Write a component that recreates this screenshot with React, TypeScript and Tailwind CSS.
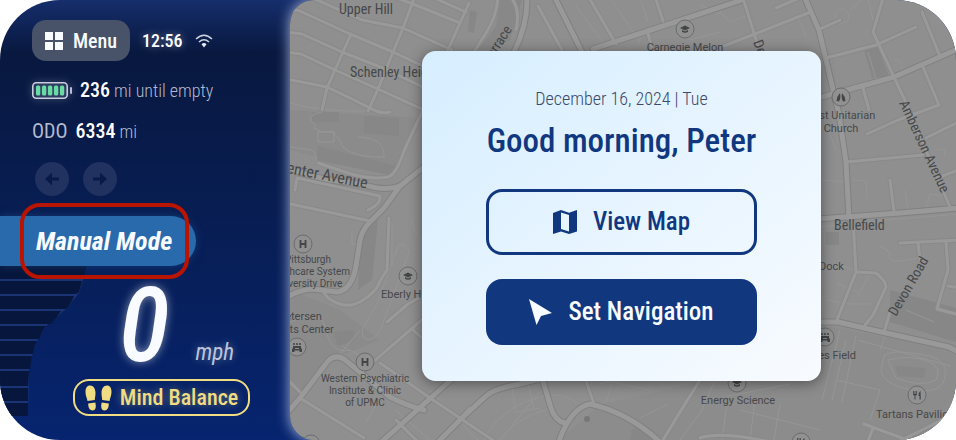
import React from "react";

const majorRoads = [
  "M286 166 Q300 174 330 180 L362 184 Q385 192 400 186 L425 166",
  "M400 186 L384 208 L370 222 Q362 230 360 240 L356 266 Q352 290 337 292 L312 289 Q298 290 286 298",
  "M378 445 L462 370",
  "M436 444 L462 418 L486 396 Q495 388 520 384 L560 374",
  "M593 49 L660 27 L742 0",
  "M804 -4 L819 30 L833 90 L839 114 L846 162 L849 218",
  "M818 98 L876 82 L894 77 L960 48",
  "M818 219 L900 213 L960 208",
  "M815 322 L838 322 L886 333 L949 347 L960 353",
  "M286 414 L300 398 L328 361 Q335 354 344 359 L390 397 Q405 405 424 410",
  "M527 -4 Q528 24 514 52",
  "M554 -4 L582 52",
  "M558 444 Q570 408 590 404 Q630 413 662 444",
  "M542 378 L551 408 Q555 421 565 423",
];

const minorRoads = [
  "M286 14 Q294 7 302 12 L350 34 L393 52 L425 67",
  "M308 -4 L362 20 L403 28 L452 50",
  "M385 -6 L413 4 L460 23",
  "M434 -2 L466 12",
  "M415 -4 L403 28 L393 52 L378 89 L368 111",
  "M351 34 L335 70 L327 88 L322 110",
  "M286 32 L302 34 L342 52 L383 68 L425 88",
  "M286 52 L301 54 L335 70 L378 89 L422 109",
  "M286 79 L327 87 L350 98 L376 111 Q384 114 390 112",
  "M469 3 L460 23 L447 52",
  "M498 -4 Q497 16 486 33 L474 52",
  "M510 -4 Q521 9 516 30",
  "M423 110 L404 151 Q396 175 388 177 Q370 180 348 173 L318 163",
  "M295 190 L297 178 L380 196 Q381 204 368 210",
  "M286 203 L370 221",
  "M321 289 L328 298 Q345 310 360 302 Q377 292 380 281 L387 270 L389 218",
  "M387 322 L408 304 L426 294",
  "M362 372 L380 356 L424 318",
  "M300 398 L364 438",
  "M290 382 L300 392",
  "M380 363 L433 400 L500 445",
  "M396 420 L418 442",
  "M413 330 L430 345",
  "M440 440 L470 408",
  "M585 378 L594 404",
  "M588 -4 L616 44",
  "M538 6 L562 50",
  "M655 -4 L663 21",
  "M647 30 L652 48",
  "M700 380 L680 412 L663 440",
  "M724 46 L808 13",
  "M743 -2 L758 46",
  "M776 8 L804 -4",
  "M820 29 L840 20",
  "M826 58 L876 45 L916 27",
  "M883 -2 L873 32 L894 77 L907 105 L930 160 L950 207",
  "M922 12 L939 54",
  "M923 67 L939 105",
  "M863 88 L869 110",
  "M867 134 L898 120 L939 105",
  "M926 138 L960 121",
  "M846 162 L923 155",
  "M940 177 L960 169",
  "M890 180 L894 211",
  "M853 220 L856 272 L837 320",
  "M856 272 L876 273 Q886 281 886 287 L873 315 L865 325",
  "M900 243 L960 240",
  "M918 243 L920 260",
  "M890 312 L884 332",
  "M946 242 L948 270 L937 309 L960 315",
  "M948 286 L960 288",
  "M864 424 L918 444",
  "M873 428 L867 444",
  "M898 442 L930 426 L960 410",
  "M700 438 Q720 431 770 442",
];

const paths = [
  "M322 112 Q308 114 311 122 Q317 124 314 128 Q322 134 332 131 Q340 138 343 147 Q355 158 384 157",
  "M358 137 Q386 138 384 158",
  "M290 147 L312 150 Q318 155 316 164",
  "M318 132 h16 v10 h-16 z",
  "M290 103 Q320 112 368 111",
  "M363 337 Q370 345 380 331 L409 253 Q408 244 399 244 L395 254",
  "M363 337 L362 330 L378 302 L398 246",
  "M290 322 Q320 310 325 326 Q330 355 350 350",
  "M335 360 L360 330 M342 346 L372 362",
  "M412 218 Q412 234 424 240",
  "M352 230 v14 h10 M392 222 v44",
  "M384 392 L366 422 M395 410 L430 440",
  "M430 390 L478 440 M500 440 L540 392",
  "M484 440 Q500 406 545 396 M500 440 Q512 420 550 408",
  "M512 388 L516 412 L540 408 M528 384 L534 408",
  "M553 395 Q570 395 577 404 M600 384 L618 378",
  "M606 402 L612 382 L650 390 M640 418 L668 404",
  "M714 382 L702 410 L680 440",
  "M722 440 L728 396 L760 390 L790 384 M740 410 L820 430",
  "M755 400 L750 440 M780 404 L774 440",
  "M610 -2 L640 42 M640 -2 L648 22 M576 6 L604 44",
  "M670 18 L690 40 L720 32 M700 5 L720 14",
  "M720 12 L730 22 L746 16 M798 18 L806 36",
  "M835 16 a7 7 0 1 0 14 0 a7 7 0 1 0 -14 0",
  "M850 10 L864 -2 M868 -2 L873 20",
  "M895 60 Q904 60 902 70 M868 52 L878 86",
  "M853 180 L866 181 L867 200 M822 180 L846 182",
  "M905 190 L908 210 M926 208 L930 194 L944 196",
  "M936 150 Q948 146 944 156 M822 114 L836 150",
  "M820 227 L884 220 L960 214",
  "M824 270 Q840 260 856 272 M826 300 L850 304 L870 304",
  "M880 246 L890 252 Q886 262 900 261 L918 258",
  "M872 270 L858 296 M838 284 L858 292",
  "M884 356 Q890 348 930 356 Q950 362 944 380 Q940 394 912 390 Q882 384 881 370 Z",
  "M888 360 Q910 354 930 362 Q942 368 936 380 Q920 388 896 378 Z",
  "M822 400 L840 330 M846 340 L832 400 M856 336 L842 402",
  "M858 340 L950 366 M836 380 L880 390 L870 420",
  "M906 310 L934 322 M880 350 L886 334 L880 330",
];

const blocks = [
  "M470 10 L477 12 L474 33 L468 31 Z",
  "M364 116 L399 118 L399 136 L364 133 Z",
  "M312 112 L339 112 L339 122 L312 122 Z",
  "M318 146 L396 166 L390 175 L316 160 Z",
  "M864 50 L878 47 L889 76 L872 78 Z",
  "M826 232 h13 v13 h-13 z",
  "M333 332 L355 330 L353 340 L338 346 Z",
  "M632 430 L640 424 L662 440 L630 440 Z",
  "M895 366 L926 368 L924 378 L898 376 Z",
  "M890 290 L956 308 L956 342 L890 322 Z",
  "M361 228 L378 220 L372 280 L358 290 Z",
];

type Label = { lines: string[]; x: number; y: number; kind: string; anchor?: "start" | "middle" | "end"; turn?: number; step?: number };

const STREET = "text-[14px] font-['Roboto_Condensed',sans-serif]";
const AVENUE = "text-[16px] font-['Roboto_Condensed',sans-serif]";
const PLACE = "text-[11px]";
const SMALL_PLACE = "text-[10px]";

const labels: Label[] = [
  { lines: ["Upper Hill"], x: 339, y: 14, kind: STREET },
  { lines: ["Schenley Heights"], x: 350, y: 77, kind: STREET },
  { lines: ["Center Avenue"], x: 277, y: 171, kind: AVENUE, turn: 11 },
  { lines: ["Terrace"], x: 490, y: 64, kind: STREET, turn: -57 },
  { lines: ["Carnegie Melon"], x: 685, y: 51, kind: PLACE, anchor: "middle" },
  { lines: ["Devonshire"], x: 753, y: 42, kind: STREET, turn: 70 },
  { lines: ["First Unitarian", "Church"], x: 841, y: 119, kind: PLACE, anchor: "middle", step: 13 },
  { lines: ["Amberson Avenue"], x: 899, y: 103, kind: STREET, turn: 65 },
  { lines: ["Bellefield"], x: 834, y: 230, kind: STREET },
  { lines: ["Dock"], x: 819, y: 270, kind: PLACE },
  { lines: ["Devon Road"], x: 896, y: 317, kind: STREET, turn: -60 },
  { lines: ["Forbes Field"], x: 856, y: 359, kind: PLACE, anchor: "end" },
  { lines: ["Tartans Pavilion"], x: 876, y: 418, kind: PLACE },
  { lines: ["Energy Science"], x: 738, y: 404, kind: PLACE, anchor: "middle" },
  { lines: ["Pittsburgh", "Healthcare System", "University Drive"], x: 308, y: 263, kind: SMALL_PLACE, anchor: "middle" },
  { lines: ["Petersen", "Events Center"], x: 300, y: 320, kind: PLACE, anchor: "middle", step: 13 },
  { lines: ["Eberly Hall"], x: 381, y: 298, kind: PLACE },
  { lines: ["Western Psychiatric", "Institute & Clinic", "of UPMC"], x: 365, y: 382, kind: SMALL_PLACE, anchor: "middle" },
];

type PinKind = "hospital" | "school" | "event" | "church" | "food";
const pins: { x: number; y: number; kind: PinKind }[] = [
  { x: 303, y: 244, kind: "hospital" },
  { x: 365, y: 362, kind: "hospital" },
  { x: 408, y: 276, kind: "school" },
  { x: 685, y: 29, kind: "school" },
  { x: 737, y: 383, kind: "school" },
  { x: 297, y: 347, kind: "event" },
  { x: 825, y: 337, kind: "event" },
  { x: 841, y: 97, kind: "church" },
  { x: 917, y: 395, kind: "food" },
  { x: 311, y: 444, kind: "school" },
  { x: 801, y: 442, kind: "food" },
];

function PinGlyph({ kind }: { kind: PinKind }) {
  switch (kind) {
    case "hospital":
      return <path d="M-2.5 -4 V4 M2.5 -4 V4 M-2.5 0 H2.5" fill="none" stroke="#434547" strokeWidth="1.8" />;
    case "school":
      return <path d="M-5 -1 L0 -3.5 L5 -1 L0 1.5 Z M-3 1 L0 2.4 L3 1 V2.8 Q0 4.6 -3 2.8 Z" fill="#434547" />;
    case "event":
      return (
        <g fill="#434547">
          <path d="M-4 -1 h8 v2 l1 1 v3 h-2.500 v-1.500 h-5 V5 h-2.500 V2 l1 -1 z" />
          <circle cx="-3" cy="-3" r="1" />
          <circle cx="0" cy="-3" r="1" />
          <circle cx="3" cy="-3" r="1" />
          <path d="M-2 1.500 h4" stroke="#8f8f8f" strokeWidth="1" />
        </g>
      );
    case "church":
      return <path d="M-1 -4 Q-4 -1 -4.500 4 L-2 4.500 Q-.5 3 -.6 -1 Z M1 -4 Q4 -1 4.500 4 L2 4.500 Q.5 3 .6 -1 Z" fill="#434547" />;
    case "food":
      return <path d="M-4 -4 v3 q0 1.500 1.500 1.500 V4.500 h1 V.5 Q0 .5 0 -1 v-3 h-.8 v3 h-.8 v-3 h-.8 v3 h-.8 v-3 z M3.500 -4 Q1.500 -3 1.500 1 H2.500 V4.500 H3.800 Z" fill="#434547" />;
  }
}

function CityMap() {
  return (
    <svg
      className="absolute inset-0 h-full w-full font-[Roboto,'Open_Sans',sans-serif]"
      viewBox="290 0 666 440"
      preserveAspectRatio="xMidYMid slice"
      aria-label="City map"
    >
      <rect x="290" width="666" height="440" fill="#8f8f8f" />
      <path d="M290 110 L420 118 L400 160 L390 175 L290 150 Z" fill="#8b8b8b" />
      <path d="M290 290 L340 310 L380 340 L330 360 L290 410 Z" fill="#8b8b8b" />
      <path d="M500 0 H522 L510 40 L490 50 L478 50 L496 26 Z" fill="#888888" />
      <path d="M820 325 L956 350 V440 H560 L600 405 L700 382 Z" fill="#8c8c8c" />
      <g fill="#878787">{blocks.map((d) => <path key={d} d={d} />)}</g>
      <g fill="none" stroke="#969696" strokeWidth="1">{paths.map((d) => <path key={d} d={d} />)}</g>
      <g fill="none" strokeLinecap="round" strokeLinejoin="round">
        <g stroke="#898989" strokeWidth="5">{minorRoads.map((d) => <path key={d} d={d} />)}</g>
        <g stroke="#808080" strokeWidth="7">{majorRoads.map((d) => <path key={d} d={d} />)}</g>
        <g stroke="#999999" strokeWidth="3">{minorRoads.map((d) => <path key={d} d={d} />)}</g>
        <g stroke="#999999" strokeWidth="5">{majorRoads.map((d) => <path key={d} d={d} />)}</g>
      </g>
      <circle cx="587" cy="419" r="3" fill="#777777" />
      {pins.map((p) => (
        <g key={`${p.x}-${p.y}`} transform={`translate(${p.x} ${p.y})`}>
          <circle r="9" fill="#919191" stroke="#6c6c6c" strokeWidth="1" />
          <PinGlyph kind={p.kind} />
        </g>
      ))}
      <g fill="#46484a">
        {labels.map((l) => (
          <text
            key={l.lines[0]}
            className={l.kind}
            textAnchor={l.anchor ?? "start"}
            transform={`translate(${l.x} ${l.y}) rotate(${l.turn ?? 0})`}
          >
            {l.lines.map((line, i) => (
              <tspan key={line} x="0" y={i * (l.step ?? 12)}>{line}</tspan>
            ))}
          </text>
        ))}
      </g>
    </svg>
  );
}

function MenuIcon() {
  return (
    <svg className="h-[18px] w-[18px]" viewBox="0 0 18 18" fill="#f8fbff" aria-hidden="true">
      <path d="M0 0h8v8H0zM10 0h8v8h-8zM0 10h8v8H0zM10 10h8v8h-8z" />
    </svg>
  );
}

function WifiIcon() {
  return (
    <svg className="h-[14px] w-[18px]" viewBox="0 0 18 14" fill="none" stroke="#cdd3e0" strokeWidth="1.500" aria-label="Wi-Fi">
      <path d="M1 5 Q9 -2.500 17 5" />
      <path d="M4 8 Q9 3.500 14 8" />
      <path d="M9 13.500 L6.500 10.200 Q9 8 11.500 10.200 Z" fill="#e6eaf2" stroke="none" />
    </svg>
  );
}

function BatteryIcon() {
  return (
    <svg className="h-[17px] w-[40px] drop-shadow-[0_0_4px_#ffffff60]" viewBox="0 0 40 17" aria-label="Battery full">
      <rect x="0.800" y="0.800" width="34.400" height="15.400" rx="3.500" fill="none" stroke="#c9cddd" strokeWidth="1.600" />
      <rect x="38" y="5" width="2" height="7" rx="1" fill="#b9bed2" />
      {[4, 10, 16, 22, 28].map((x) => <rect key={x} x={x} y="3.500" width="4.200" height="10" rx="1.500" fill="#69dba4" />)}
    </svg>
  );
}

function ArrowIcon({ flip = false }: { flip?: boolean }) {
  return (
    <svg className={flip ? "h-[14px] w-[14px] rotate-180" : "h-[14px] w-[14px]"} viewBox="0 0 14 14" fill="#0a1a48" aria-hidden="true">
      <path d="M0 7 L7 0.500 V5.500 H14 V8.500 H7 V13.500 Z" />
    </svg>
  );
}

function FootprintsIcon() {
  return (
    <svg className="h-[26px] w-[27px]" viewBox="0 0 27 26" fill="#f0dc82" aria-hidden="true">
      <path d="M5 0.500 C8.500 0.500 10.500 4 10.500 8 C10.500 11 9.800 13 9.800 15 L2.500 16 C2 13 0.500 10.500 0.500 7 C0.500 3 2 0.500 5 0.500 Z" />
      <path d="M3.200 18.500 L10.300 17.500 C11.500 22 10.500 25.500 7.500 25.500 C4.500 25.500 3.200 22.500 3.200 18.500 Z" />
      <path d="M22 0.500 C18.500 0.500 16.500 4 16.500 8 C16.500 11 17.200 13 17.200 15 L24.500 16 C25 13 26.500 10.500 26.500 7 C26.500 3 25 0.500 22 0.500 Z" />
      <path d="M23.800 18.500 L16.700 17.500 C15.500 22 16.500 25.500 19.500 25.500 C22.500 25.500 23.800 22.500 23.800 18.500 Z" />
    </svg>
  );
}

function MapIcon() {
  return (
    <svg className="h-6 w-6" viewBox="0 0 24 24" fill="#11387f" fillRule="evenodd" aria-hidden="true">
      <path d="M0 3 L8 0 L16 2.700 L24 0 V21.500 L16 24 L8 21.500 L0 24 Z M8 2.500 V19 L16 21.500 V5 Z" />
    </svg>
  );
}

function PointerIcon() {
  return (
    <svg className="h-[26px] w-[23px]" viewBox="0 0 23 26" fill="#f8fbff" aria-hidden="true">
      <path d="M0 0 L23 14 L12 17 L7.500 26 Z" />
    </svg>
  );
}

function PowerGauge() {
  return (
    <svg className="absolute top-0 left-0 h-[152px] w-[92px]" viewBox="0 0 92 152" aria-hidden="true">
      <path d="M0 0 H87 L84 11 L79 27 L66 43 L46 60 L37 75 L32 90 L29 105 L28 150 H0 Z" fill="#1a3475" />
      <g fill="#07163c">
        <path d="M0 0 H87 L84 11 Q83 13 81 13 H0 Z" />
        <path d="M0 15 H82 L79 26 Q77 28 75 28 H0 Z" />
        <path d="M0 30 H74 Q72 36 66 43 H0 Z" />
        <path d="M0 45 H61 Q57 51 51 58 H0 Z" />
        <path d="M0 60 H46 Q42 65 39 73 H0 Z" />
        <path d="M0 75 H37 Q34 81 33 88 H0 Z" />
        <path d="M0 90 H32 L30 103 H0 Z" />
        <path d="M0 105 H29 L28 120 H0 Z" />
        <path d="M0 122 H28 V135 H0 Z" />
        <path d="M0 137 H28 V150 H0 Z" />
      </g>
    </svg>
  );
}

function Dashboard() {
  return (
    <aside className="relative flex w-[290px] shrink-0 flex-col">
      <div className="flex items-center gap-3 pt-5 pl-8">
        <button className="flex h-[41px] w-[98px] items-center justify-center gap-[10px] rounded-[14px] bg-[#485268] text-[20px] font-medium text-[#f8fbff]">
          <MenuIcon />
          Menu
        </button>
        <time className="text-[18px] font-medium text-white [text-shadow:0_0_8px_#ffffff70]">12:56</time>
        <WifiIcon />
      </div>
      <p className="mt-4 flex h-[26px] items-center pl-8 text-[18px] font-light text-[#b4bbcf]">
        <BatteryIcon />
        <span className="ml-2"><b className="text-[20px] font-medium text-white">236</b> mi until empty</span>
      </p>
      <p className="mt-4 flex h-6 items-center gap-2 pl-8 text-[18px] font-light text-[#b4bbcf]">
        <span className="text-[20px] font-normal">ODO</span>
        <span><b className="text-[20px] font-medium text-white">6334</b> mi</span>
      </p>
      <div className="mt-[19px] flex gap-[14px] pl-[35px]">
        <button aria-label="Previous" className="grid h-[34px] w-[34px] place-items-center rounded-full bg-[#213160]"><ArrowIcon /></button>
        <button aria-label="Next" className="grid h-[34px] w-[34px] place-items-center rounded-full bg-[#213160]"><ArrowIcon flip /></button>
      </div>
      <div className="relative z-10 mt-5 flex h-[50px] w-[196px] items-center rounded-r-[25px] bg-[#296aac] pl-9 shadow-[0_0_10px_#296aac60]">
        <span className="text-[26px] font-bold text-[#f8fbff] italic">Manual Mode</span>
        <span className="absolute -top-[13px] left-5 h-[76px] w-[169px] rounded-[20px] border-4 border-[#b81400]" />
      </div>
      <div className="relative flex-1">
        <PowerGauge />
        <div className="relative flex h-[113px] items-end gap-[26px] pl-[119px] text-[#f8fbff] italic">
          <span className="text-[104px] leading-[106px] font-medium [text-shadow:0_0_10px_#ffffff80]">0</span>
          <span className="pb-[14px] text-[23px] leading-6 text-[#bcc4dc] [text-shadow:0_0_8px_#ffffff60]">mph</span>
        </div>
        <button className="relative ml-[73px] flex h-[37px] w-[177px] items-center justify-center gap-2 rounded-[16px] border-2 border-[#f0dc82] text-[22px] font-medium text-[#f0dc82] [text-shadow:0_0_8px_#f0dc8270]">
          <FootprintsIcon />
          Mind Balance
        </button>
      </div>
    </aside>
  );
}

function GreetingCard() {
  return (
    <section className="relative flex w-[399px] flex-col items-center rounded-[14px] bg-linear-to-br from-[#d6eeff] to-[#f8fbff] px-16 py-9 shadow-[0_2px_14px_#00000070]">
      <p className="text-[18px] leading-6 font-light text-[#3c4a6c]">December 16, 2024 | Tue</p>
      <h1 className="mt-[10px] text-[33px] leading-10 font-medium whitespace-nowrap text-[#11387f]">Good morning, Peter</h1>
      <button className="mt-7 flex h-[66px] w-full items-center justify-center gap-4 rounded-[16px] border-3 border-[#11387f] text-[25px] font-medium text-[#11387f]">
        <MapIcon />
        View Map
      </button>
      <button className="mt-6 flex h-[66px] w-full items-center justify-center gap-4 rounded-[16px] bg-[#11387f] text-[25px] font-medium text-[#f8fbff]">
        <PointerIcon />
        Set Navigation
      </button>
    </section>
  );
}

export default function App() {
  return (
    <div className="min-h-screen bg-white">
      <div className="flex min-h-screen overflow-hidden rounded-[60px] bg-linear-to-b from-[#162e6c] via-[#08183f] via-12% to-[#06246f] font-['Roboto_Condensed',Roboto,sans-serif]">
        <Dashboard />
        <main className="relative grid flex-1 place-items-center overflow-hidden rounded-l-[24px] pr-[3px] pb-2 shadow-[0_0_14px_#a9b9e0]">
          <CityMap />
          <GreetingCard />
        </main>
      </div>
    </div>
  );
}
